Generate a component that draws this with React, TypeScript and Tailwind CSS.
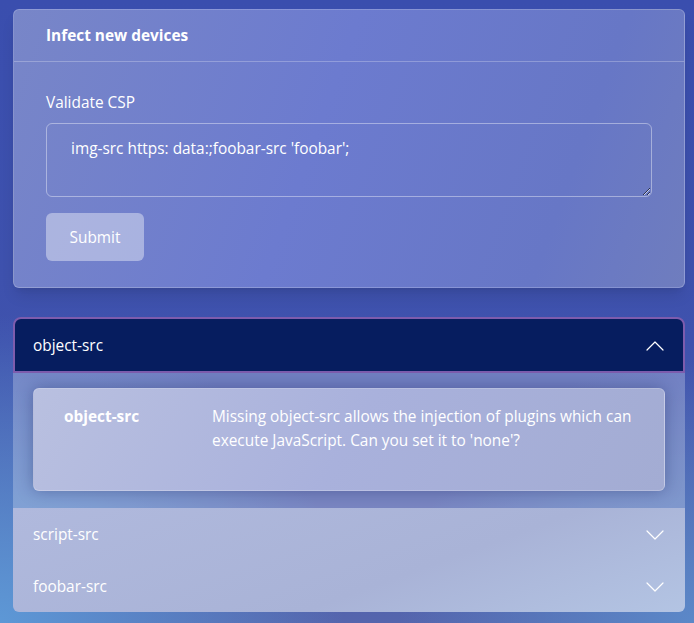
import { ChevronDown, ChevronUp } from "lucide-react";

const rows = [
  { name: "script-src" },
  { name: "foobar-src" },
];

export default function App() {
  return (
    <div className="min-h-[623px] w-full bg-[radial-gradient(ellipse_at_0%_100%,#5d98d6_0%,rgba(93,152,214,0)_35%),radial-gradient(ellipse_at_100%_100%,#5b88c8_0%,rgba(91,136,200,0)_30%),linear-gradient(180deg,#3a4eae_0%,#3f52ad_55%,#5565ad_100%)] pl-[13px] pr-[9px] pt-[9px] pb-3 font-['Open_Sans',sans-serif] text-white">
      {/* Form card */}
      <div className="rounded-md border border-white/20 bg-[linear-gradient(110deg,#7886c8_0%,#6c7bcf_45%,#6777c6_80%,#6f7dbe_100%)] shadow-lg">
        <div className="border-b border-white/25 px-8 pt-[14px] pb-[13px]">
          <h1 className="text-[15.4px] font-bold leading-[24px]">Infect new devices</h1>
        </div>
        <div className="px-8 pt-[29px] pb-[26px]">
          <label className="block text-[15.4px] leading-[24px]">Validate CSP</label>
          <textarea
            className="mt-[8px] block h-[74px] w-full resize-y rounded-md border border-white/40 bg-transparent px-6 pt-[13px] pb-[11px] text-[15.4px] leading-[24px] text-white outline-none"
            defaultValue="img-src https: data:;foobar-src 'foobar';"
          />
          <button className="mt-[16px] h-[48px] w-[98px] rounded-md bg-white/40 pt-[1px] text-[15.4px] text-white">
            Submit
          </button>
        </div>
      </div>

      {/* Accordion */}
      <div className="mt-[29px] overflow-hidden rounded-md">
        <div className="flex h-[56px] items-center justify-between rounded-t-lg border-2 border-[#7d5cad] bg-[#061d5f] pl-[18px] pr-[12px] pt-[1px]">
          <span className="text-[15.4px]">object-src</span>
          <ChevronUp size={32} strokeWidth={0.9} />
        </div>
        <div className="bg-white/25 px-5 pt-[15px] pb-[17px]">
          <div className="flex rounded-md border border-white/20 bg-[linear-gradient(120deg,#b9c0e0_0%,#a9b1dc_50%,#a3acd3_100%)] px-[30px] pt-[16px] pb-[37px] shadow-[0_0_16px_rgba(20,30,90,0.35)]">
            <div className="w-[148px] shrink-0 text-[15.4px] font-bold leading-[24px]">object-src</div>
            <p className="text-[15.4px] leading-[24px]">
              Missing object-src allows the injection of plugins which can execute JavaScript. Can you set it to 'none'?
            </p>
          </div>
        </div>
        <div className="bg-[linear-gradient(160deg,#b0b9dd_0%,#a9b3d7_60%,#b3c4e3_100%)]">
          {rows.map((r) => (
            <div key={r.name} className="flex h-[52px] items-center justify-between pl-5 pr-[14px] pt-[1px]">
              <span className="text-[15.4px]">{r.name}</span>
              <ChevronDown size={32} strokeWidth={0.9} />
            </div>
          ))}
        </div>
      </div>
    </div>
  );
}
